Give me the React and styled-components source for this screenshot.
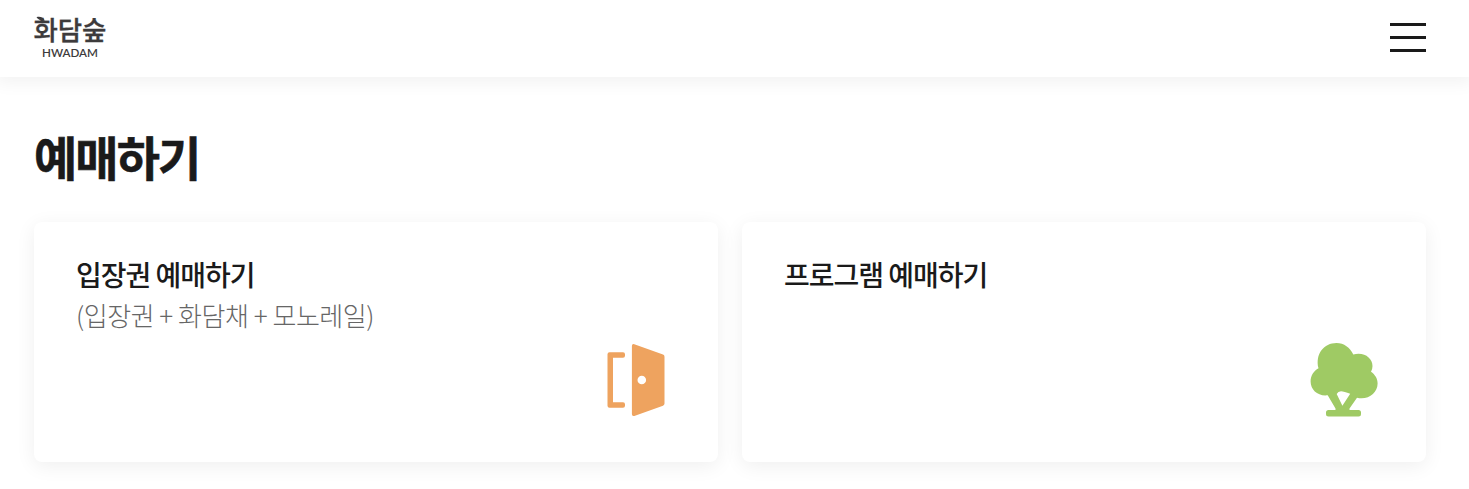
import React from 'react';
import styled, { createGlobalStyle } from 'styled-components';

const GlobalStyle = createGlobalStyle`
  * {
    box-sizing: border-box;
  }

  body {
    margin: 0;
    background-color: #ffffff;
    color: #1a1a1a;
    font-family: 'Noto Sans CJK KR', 'Noto Sans', sans-serif;
    overflow: hidden;
  }
`;

const Header = styled.header`
  display: flex;
  align-items: flex-start;
  justify-content: space-between;
  height: 77px;
  padding: 7px 43px 0 30px;
  background-color: #ffffff;
  box-shadow: 0 2px 16px 4px rgba(0, 0, 0, 0.05);
`;

const Logo = styled.svg`
  display: block;
  width: 82px;
  height: 60px;
  fill: #3d3b3c;
  overflow: visible;
`;

const LogoName = styled.text`
  font-size: 26.5px;
  font-weight: 500;
  stroke: #3d3b3c;
  stroke-width: 0.3px;
`;

const LogoLatin = styled.text`
  font-family: Lato, sans-serif;
  font-size: 11px;
  font-weight: 600;
`;

const MenuButton = styled.button`
  display: flex;
  flex-direction: column;
  gap: 10px;
  width: 36px;
  margin: 16px 0 0;
  padding: 0;
  border: 0;
  background: none;
`;

const MenuLine = styled.span`
  height: 3px;
  background-color: #1a1a1a;
`;

const Main = styled.main`
  padding: 44px 43px 27px 34px;
`;

const PageTitle = styled.h1`
  margin: 0 0 31px;
  height: 70px;
  line-height: 70px;
  font-size: 47px;
  font-weight: 700;
  letter-spacing: -0.041em;
  -webkit-text-stroke: 0.6px #1a1a1a;
`;

const CardList = styled.div`
  display: grid;
  grid-template-columns: 1fr 1fr;
  gap: 24px;
`;

const Card = styled.section`
  display: flex;
  justify-content: space-between;
  height: 240px;
  padding: 31px 42px 40px;
  border-radius: 8px;
  background-color: #ffffff;
  box-shadow: 0 4px 20px rgba(0, 0, 0, 0.065);
`;

const CardTitle = styled.h2`
  margin: 0;
  line-height: 42px;
  font-size: 28px;
  font-weight: 500;
  letter-spacing: -0.036em;
`;

const CardNote = styled.p`
  margin: 0;
  line-height: 39px;
  font-size: 26px;
  font-weight: 300;
  letter-spacing: -0.018em;
  color: #666666;
`;

const CardIcon = styled.svg`
  align-self: flex-end;
  width: 80px;
  height: 80px;
  fill: ${(props) => props.$color};
`;

const DoorIcon = () => (
  <CardIcon viewBox="596 342 80 80" $color="#eea35f">
    <path d="M623 352.2a2 2 0 0 1 2 2v1.600a2 2 0 0 1-2 2h-10v44.400h10a2 2 0 0 1 2 2v1.600a2 2 0 0 1-2 2h-13.500a2 2 0 0 1-2-2v-51.600a2 2 0 0 1 2-2z" />
    <path
      fillRule="evenodd"
      d="M634.300 344.200l28.700 10.300q1.500.5 1.500 2.200v46.800q0 1.600-1.500 2.200l-28.700 10.200q-2.400.6-2.400-1.900v-67.900q0-2.500 2.400-1.900zM641.800 375.700a4.300 4.300 0 1 0 0 8.600a4.300 4.300 0 1 0 0-8.600z"
    />
  </CardIcon>
);

const TreeIcon = () => (
  <CardIcon viewBox="1304 342 80 80" $color="#9fca64">
    <path
      fillRule="evenodd"
      d="M1318.500 368.300C1315 354 1324 343 1336.500 343C1344 343 1350 347.500 1353.300 354.500C1364 351.500 1372.500 358 1372.500 366Q1372.500 369 1371 371.700C1375 374.500 1377.600 378.500 1377.600 383.500C1377.600 393 1368 400.500 1357 397.800L1349.500 408.500V410H1358.500Q1361 410 1361 412.500V414Q1361 416.500 1358.500 416.500H1328.500Q1326 416.500 1326 414V412.500Q1326 410 1328.500 410H1335.500V408.500L1327.700 395.300C1318 396.500 1310.600 390 1310.600 381.500C1310.600 375.500 1314 371 1318.500 368.300ZM1336.700 394L1342.400 405.700L1350.200 393.800Q1344 391.400 1341 391.300Q1338 391.300 1336.700 394Z"
    />
  </CardIcon>
);

const App = () => {
  return (
    <>
      <GlobalStyle />
      <Header>
        <Logo viewBox="0 0 82 60">
          {/* leaf above the first syllable */}
          <path d="M6.500 10.200C9.500 9 13.500 10.200 14.800 13.500C11.500 14.200 8.500 13 6.500 10.200Z" />
          <LogoName x="3.500" y="32.500" textLength="73" lengthAdjust="spacing">화담숲</LogoName>
          <LogoLatin x="12" y="50" textLength="56" lengthAdjust="spacingAndGlyphs">HWADAM</LogoLatin>
        </Logo>
        <MenuButton aria-label="메뉴">
          <MenuLine />
          <MenuLine />
          <MenuLine />
        </MenuButton>
      </Header>
      <Main>
        <PageTitle>예매하기</PageTitle>
        <CardList>
          <Card>
            <div>
              <CardTitle>입장권 예매하기</CardTitle>
              <CardNote>(입장권 + 화담채 + 모노레일)</CardNote>
            </div>
            <DoorIcon />
          </Card>
          <Card>
            <CardTitle>프로그램 예매하기</CardTitle>
            <TreeIcon />
          </Card>
        </CardList>
      </Main>
    </>
  );
};

export default App;
